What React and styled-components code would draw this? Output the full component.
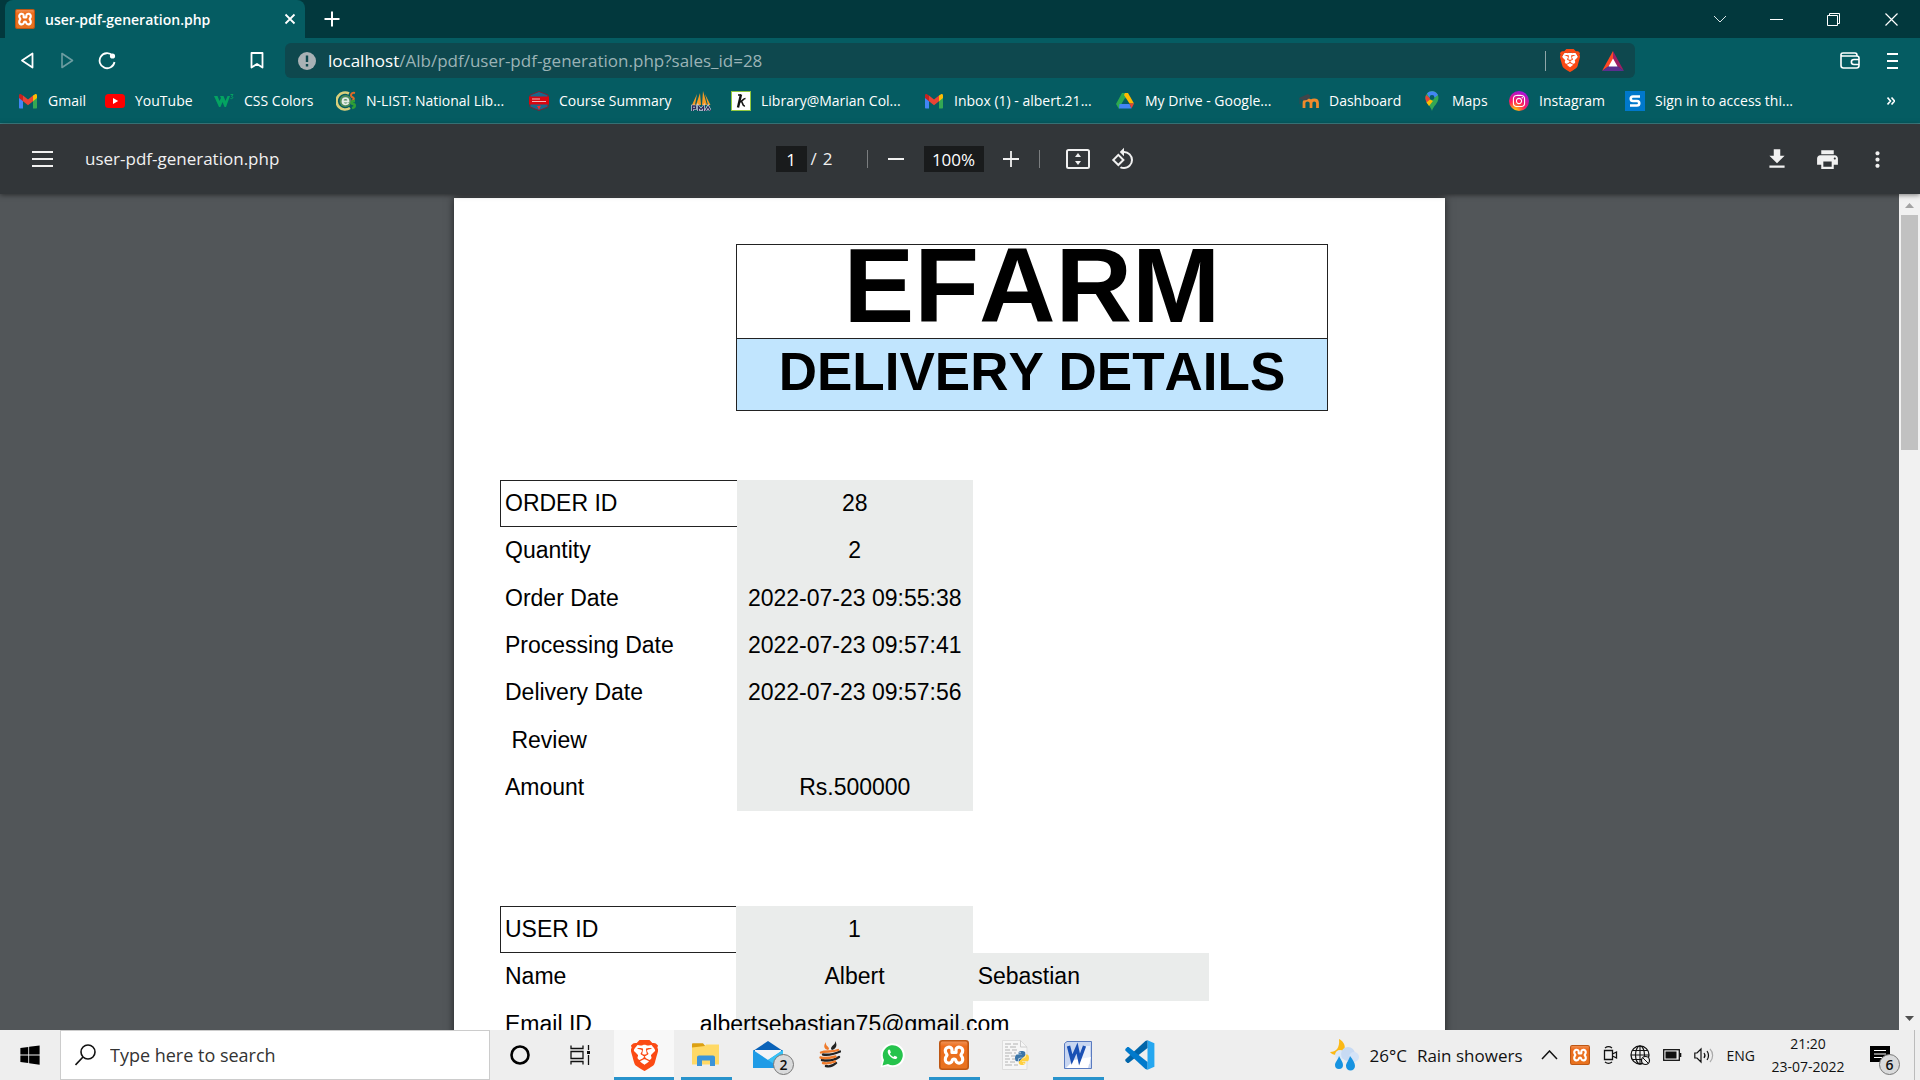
import React from "react";
import styled, { createGlobalStyle, css } from "styled-components";
import { SiBrave } from "react-icons/si";
import { FaWindows, FaInstagram, FaPython } from "react-icons/fa";
import {
  MdPrint,
  MdFileDownload,
  MdMoreVert,
  MdRotate90DegreesCcw,
} from "react-icons/md";

const ui = `"Open Sans", "Noto Sans", sans-serif`;
const doc = `"Liberation Sans", Arial, sans-serif`;

const GlobalStyle = createGlobalStyle`
  * { box-sizing: border-box; }
  body { margin: 0; font-family: ${ui}; overflow: hidden; }
  button, input { font: inherit; color: inherit; border: 0; padding: 0; margin: 0; background: none; }
  a { color: inherit; text-decoration: none; }
  svg { display: block; flex: none; }
`;

const Screen = styled.div`
  display: flex;
  flex-direction: column;
  height: 100vh;
`;

const IconButton = styled.button`
  display: flex;
  align-items: center;
  justify-content: center;
  flex: none;
  width: ${(p) => p.$w || 40}px;
  height: ${(p) => p.$h || 38}px;
`;

const Spacer = styled.div`
  flex: 1;
`;

/* ---------- browser chrome ---------- */

const TabStrip = styled.header`
  display: flex;
  flex: none;
  height: 38px;
  padding-left: 5px;
  background: #02383d;
  color: #fff;
`;

const Tab = styled.div`
  display: flex;
  align-items: center;
  width: 300px;
  padding: 0 6px 0 10px;
  border-radius: 8px 8px 0 0;
  background: #055c62;
  font-size: 14px;
  font-weight: 600;
`;

const TabTitle = styled.span`
  flex: 1;
  padding-left: 10px;
  white-space: nowrap;
`;

const AddressRow = styled.nav`
  display: flex;
  align-items: center;
  flex: none;
  height: 45px;
  padding: 0 8px 0 7px;
  background: #055c62;
  color: #fff;
`;

const NavButtons = styled.div`
  display: flex;
  width: 230px;
`;

const AddressBar = styled.div`
  display: flex;
  align-items: center;
  flex: 0 1 1350px;
  height: 35px;
  margin-left: 8px;
  padding: 0 3px 0 13px;
  border-radius: 6px;
  background: #0e484e;
`;

const Url = styled.a`
  flex: 1;
  padding-left: 12px;
  font-size: 17px;
  color: #9bb3b6;
  white-space: nowrap;
  b {
    font-weight: 400;
    color: #fff;
  }
`;

const BarRule = styled.span`
  width: 1px;
  height: 20px;
  background: #8fa6a8;
`;

const Bookmarks = styled.nav`
  display: flex;
  align-items: center;
  gap: 20px;
  flex: none;
  height: 41px;
  padding: 0 25px 5px 18px;
  border-bottom: 1px solid #3f8388;
  background: #055c62;
  color: #fff;
  font-size: 14px;
`;

const Bookmark = styled.a`
  display: flex;
  align-items: center;
  gap: 10px;
`;

const BookmarkLabel = styled.span`
  width: ${(p) => p.$w}px;
  white-space: nowrap;
`;

/* ---------- pdf viewer ---------- */

const PdfToolbar = styled.div`
  display: grid;
  grid-template-columns: 1fr auto 1fr;
  align-items: center;
  flex: none;
  position: relative;
  z-index: 1;
  height: 70px;
  padding: 0 23px 0 22px;
  background: #323639;
  color: #f1f1f1;
  box-shadow: 0 1px 5px rgba(0, 0, 0, 0.5);
`;

const ToolGroup = styled.div`
  display: flex;
  align-items: center;
  justify-content: ${(p) => (p.$end ? "flex-end" : "flex-start")};
  gap: ${(p) => p.$gap || 0}px;
`;

const FileName = styled.h1`
  margin: 0;
  font-size: 17px;
  font-weight: 500;
  line-height: 20px;
`;

const ToolField = styled.input`
  && {
    width: ${(p) => p.$w}px;
    height: 26px;
    background: #191b1c;
    color: #fff;
    font-size: 17px;
    text-align: center;
  }
`;

const PageCount = styled.span`
  display: flex;
  gap: 6px;
  width: 60px;
  padding-left: 4px;
  font-size: 17px;
  line-height: 20px;
`;

const ToolRule = styled.span`
  width: 1px;
  height: 18px;
  margin-right: ${(p) => p.$after || 0}px;
  background: #7b7e80;
`;

const Viewer = styled.main`
  display: flex;
  flex: 1;
  min-height: 0;
  overflow: hidden;
  background: #525659;
`;

const PageArea = styled.div`
  display: flex;
  justify-content: center;
  align-items: flex-start;
  flex: 1;
  padding-top: 4px;
  overflow: hidden;
`;

const Page = styled.article`
  flex: none;
  width: 991px;
  min-height: 1400px;
  padding: 46px;
  background: #fff;
  color: #000;
  font-family: ${doc};
  font-size: 23px;
  box-shadow: 0 0 8px rgba(0, 0, 0, 0.6);
`;

const TitleBlock = styled.div`
  width: 592px;
  margin-left: 236px;
  border: 1px solid #222;
  text-align: center;
  font-weight: 700;
  font-kerning: none;
  white-space: nowrap;
`;

const Title = styled.h2`
  margin: 0;
  height: 93px;
  font-size: 106px;
  line-height: 80px;
`;

const Subtitle = styled.h3`
  margin: 0;
  height: 72px;
  border-top: 1px solid #222;
  background: #c1e5fe;
  font-size: 53px;
  line-height: 65px;
`;

const Details = styled.table`
  table-layout: fixed;
  width: ${(p) => p.$cols * 236 + 1}px;
  height: ${(p) => p.$height}px;
  margin-top: ${(p) => p.$top}px;
  border-collapse: separate;
  border-spacing: 0;
`;

const Label = styled.th`
  padding: 0 5px;
  font-weight: 400;
  text-align: left;
  white-space: pre;
  ${(p) =>
    p.$boxed &&
    css`
      box-shadow: inset 1px 1px #222, inset 0 -1px #222;
    `}
`;

const Value = styled.td`
  padding: 0;
  background: #eaeceb;
`;

const ValueText = styled.div`
  display: flex;
  justify-content: ${(p) => (p.$left ? "flex-start" : "center")};
  padding-left: ${(p) => (p.$left ? 5 : 0)}px;
  white-space: nowrap;
`;

const Scrollbar = styled.div`
  display: flex;
  flex-direction: column;
  align-items: center;
  width: 21px;
  padding: 9px 2px;
  background: #f1f1f1;
`;

const Thumb = styled.div`
  width: 17px;
  height: 235px;
  margin: 7px 0 auto;
  background: #c1c1c1;
`;

/* ---------- taskbar ---------- */

const Taskbar = styled.footer`
  display: flex;
  flex: none;
  height: 50px;
  background: #eee;
  color: #111;
`;

const SearchBox = styled.label`
  display: flex;
  align-items: center;
  gap: 14px;
  width: 430px;
  padding-left: 14px;
  border: 1px solid #ccc;
  background: #fff;
`;

const SearchInput = styled.input`
  && {
    flex: 1;
    min-width: 0;
    font-size: 18px;
    color: #333;
    outline: 0;
  }
  &::placeholder {
    color: #333;
    opacity: 1;
  }
`;

const Apps = styled.div`
  display: flex;
  gap: 2px;
  padding-left: 4px;
`;

const AppButton = styled.button`
  && {
    position: relative;
    display: flex;
    align-items: center;
    justify-content: center;
    width: 60px;
    background: ${(p) => (p.$active ? "#f8f8f8" : "none")};
  }
  &::after {
    content: "";
    position: absolute;
    bottom: 0;
    left: ${(p) => (p.$active ? 0 : 5)}px;
    right: ${(p) => (p.$active ? 0 : 4)}px;
    height: 3px;
    background: ${(p) => (p.$open || p.$active ? "#2893cc" : "none")};
  }
`;

const CountBadge = styled.span`
  position: absolute;
  left: ${(p) => p.$x}px;
  top: 24px;
  width: 21px;
  height: 21px;
  border: 1px solid #777;
  border-radius: 50%;
  background: #d9dadb;
  color: #111;
  font-size: 14px;
  font-weight: 600;
  line-height: 19px;
  text-align: center;
`;

const Weather = styled.button`
  display: flex;
  align-items: center;
  gap: 10px;
  margin-right: 18px;
  font-size: 17px;
  white-space: nowrap;
`;

const Tray = styled.div`
  display: flex;
  align-items: center;
  gap: 12px;
  padding-right: 6px;
  font-size: 14px;
`;

const Clock = styled.button`
  display: flex;
  flex-direction: column;
  justify-content: center;
  align-items: center;
  width: 94px;
  font-size: 14px;
  line-height: 23px;
`;

const Notifications = styled.button`
  && {
    position: relative;
    width: 60px;
    margin-right: 5px;
    padding-left: 15px;
    border-right: 1px solid #bbb;
  }
`;

/* ---------- drawings ---------- */

const Svg = ({ w = 20, h = w, box, children, ...rest }) => (
  <svg
    width={w}
    height={h}
    viewBox={box || `0 0 ${w} ${h}`}
    fill="none"
    aria-hidden="true"
    {...rest}
  >
    {children}
  </svg>
);

const XamppIcon = ({ size = 20 }) => (
  <Svg w={size} box="0 0 30 30">
    <defs>
      <linearGradient id="xamppFill" x1="0" y1="0" x2="0" y2="1">
        <stop offset="0" stopColor="#f0955a" />
        <stop offset=".2" stopColor="#ee6d1d" />
        <stop offset="1" stopColor="#e8731f" />
      </linearGradient>
    </defs>
    <rect x=".8" y=".8" width="28.4" height="28.4" rx="2.5" fill="url(#xamppFill)" stroke="#bd5714" strokeWidth="1.6" />
    <path
      d="M13 12.500V10c0-4.500-8-3.500-6.500 2 .4 1.400 1.500 2 1.500 3s-1.100 1.600-1.500 3c-1.500 6 6 6.500 6.700 2.500.4-2 3.200-2 3.600 0 .7 4 8.200 3.500 6.700-2.500-.4-1.400-1.500-2-1.500-3s1.100-1.600 1.500-3c1.500-5.500-6.500-6.500-6.500-2v2.500z"
      stroke="#fff"
      strokeWidth="3.200"
      strokeLinejoin="round"
    />
  </Svg>
);

const BraveIcon = ({ w = 20, h = 23 }) => (
  <Svg w={w} h={h} box="2 0 20 24" preserveAspectRatio="none">
    <path d="M6 4h12l2 4-3 10-5 4-5-4L4 8z" fill="#fff" />
    <SiBrave size={24} color="#fb4a14" />
  </Svg>
);

const GmailIcon = () => (
  <Svg w={20} box="0 0 20 20">
    <path d="M1 5v11.500c0 .6.400 1 1 1h3V8z" fill="#4285f4" />
    <path d="M19 5v11.500c0 .6-.4 1-1 1h-3V8z" fill="#34a853" />
    <path d="M15 4.500 17 3.300c1-.6 2 .1 2 1.200V7l-4 3.200z" fill="#fbbc04" />
    <path d="M5 4.500 3 3.300c-1-.6-2 .1-2 1.200V7l4 3.200z" fill="#c5221f" />
    <path d="M5 4.500 10 8.500l5-4v5.700l-5 4-5-4z" fill="#ea4335" />
  </Svg>
);

const YouTubeIcon = () => (
  <Svg>
    <rect x="0" y="3" width="20" height="14" rx="3.500" fill="#f00" />
    <path d="m8 7 5.200 3L8 13z" fill="#fff" />
  </Svg>
);

const W3Icon = () => (
  <Svg>
    <path d="M0 5h3.500l2 5 1.500-3-1-2h3.500l2 5 2-5h2.500l-4 11h-1.500L8.500 11 6.500 16H5z" fill="#04a361" />
    <path d="M16.500 3.500h2.500l-1.500 2c2 0 1.800 2.800-1 2" stroke="#04a361" strokeWidth="1" />
  </Svg>
);

const NListIcon = () => (
  <Svg>
    <path d="M14 17A8.500 8.500 0 1 1 13 2.500" stroke="#d9cf7b" strokeWidth="2.600" />
    <circle cx="9.500" cy="10" r="6" fill="#4d8b5a" />
    <path d="M6.500 10.500h6c0-4.500-6-4.500-6 0 0 3.500 4.500 3.500 6 1.500" stroke="#e6ece8" strokeWidth="1.800" />
    <path d="M19 2c-4-1-5 3-3 4s3 2 0 4" stroke="#dd6a28" strokeWidth="2" />
    <path d="M19 10c-4 0-4 3-2 3s3 3-1 4" stroke="#2e9e36" strokeWidth="2.500" />
  </Svg>
);

const AcademyIcon = () => (
  <Svg>
    <path d="M10 .500 19 4v12l-9 3.500L1 16V4z" fill="#17688b" stroke="#7b2231" />
    <path d="M0 5.500h20v8H0z" fill="#d8060f" />
    <path d="M3 8h8M3 10.500h14" stroke="#f1b9bb" strokeWidth="1.200" />
    <path d="m8 15 4-.2-2 4z" fill="#f0282c" />
  </Svg>
);

const PmaIcon = () => (
  <Svg>
    <path d="M6 3 1 14h3zM9 2 5 14h5zM12 0l-1 14h5zM14 3l3 11h2.500z" fill="#f59a23" />
    <path d="M1.500 20v-5h3v2.500h-3M7.500 20v-4.500l2.500 3 2.500-3V20M14.500 20l2.500-4.500 2.500 4.500" stroke="#d8d8e6" strokeWidth="2.600" />
    <path d="M1.500 20v-5h3v2.500h-3M7.500 20v-4.500l2.500 3 2.500-3V20M14.500 20l2.500-4.500 2.500 4.500" stroke="#2c2d5a" strokeWidth="1.300" />
  </Svg>
);

const KohaIcon = () => (
  <Svg>
    <rect x=".5" y=".5" width="19" height="19" fill="#fff" stroke="#92c83e" />
    <path d="M10 3.500 7 16.500" stroke="#111" strokeWidth="2.400" />
    <path d="M7 4h3M8.500 11c3-.5 3.500-3.500 6-3.500M10 10.500c2.200 0 .8 5 4 4.500" stroke="#111" strokeWidth="1.600" />
  </Svg>
);

const DriveIcon = () => (
  <Svg box="0 0 20 20">
    <path d="m1 13 6-11h3l2 3-6 9-2 4z" fill="#2da94f" />
    <path d="M10 2h3l6 10.500h-4.500L9 4z" fill="#ffba00" />
    <path d="M4.500 13h10l2 4.500H4z" fill="#4385f4" />
    <path d="M14.500 12.500H19L16.500 17.500z" fill="#ea4335" />
    <path d="m10 7-3.500 6h7z" fill="#055c62" />
  </Svg>
);

const MoodleIcon = () => (
  <Svg>
    <path d="M5 17v-5c0-4 7-4 7 0v5m0-5c0-4 6.500-4 6.500 0v5" stroke="#f08a2c" strokeWidth="2.800" />
    <path d="m0 7 9-4 3 2-4 4-4 .5z" fill="#40454a" />
    <path d="M1 7v6" stroke="#40454a" />
  </Svg>
);

const MapsIcon = () => (
  <Svg>
    <path d="M10 20C9 15 3.500 12.500 3.500 6.500a6.500 6.500 0 0 1 13 0C16.500 12.500 11 15 10 20z" fill="#34a853" />
    <path d="M4 4 8.500 7.500 5 12C3 8.500 3 6.500 4 4z" fill="#ea4335" />
    <path d="M8 8.500 11 10l-4 5-2.500-3.500z" fill="#fbbc04" />
    <path d="M5 2.500C8-1 14-.5 16 4l-4 3-2-2-2 2.500z" fill="#4285f4" />
    <circle cx="10" cy="6.500" r="2.400" fill="#055c62" />
  </Svg>
);

const InstagramIcon = () => (
  <Svg>
    <defs>
      <radialGradient id="insta" cx=".3" cy="1" r="1.100">
        <stop offset="0" stopColor="#fd0" />
        <stop offset=".45" stopColor="#ff1f5a" />
        <stop offset="1" stopColor="#9a0ff0" />
      </radialGradient>
    </defs>
    <circle cx="10" cy="10" r="10" fill="url(#insta)" />
    <FaInstagram x="3" y="3" size={14} color="#fff" />
  </Svg>
);

const SIcon = () => (
  <Svg>
    <rect width="20" height="20" fill="#0078cc" />
    <path d="M15 5.500H8c-3 0-3 4.500 0 4.500h4c3 0 3 4.500 0 4.500H5" stroke="#fff" strokeWidth="2.600" />
  </Svg>
);

const BatIcon = () => (
  <Svg w={22} h={20}>
    <path d="M11 0 0 20l11-8z" fill="#ff4724" />
    <path d="M11 0v12l11 8z" fill="#9e1f63" />
    <path d="m0 20 11-8 11 8z" fill="#5b2f8f" />
    <path d="m11 7.500 4.500 8h-9z" fill="#fff" />
  </Svg>
);

const FolderIcon = () => (
  <Svg w={28} h={24}>
    <path d="M0 1.500C0 .7.500.3 1 .3h10l2.500 3v3H0z" fill="#dca012" />
    <path d="M0 4.500 13 3l1-1.500h13v20H0z" fill="#ffd966" />
    <path d="M5 23V14.500c0-1.200.8-2 2-2h14c1.200 0 2 .8 2 2V23h-5v-5.500h-8V23z" fill="#3b94d9" />
  </Svg>
);

const MailIcon = () => (
  <Svg w={30} h={30}>
    <path d="M0 11 15 1l15 10v17H0z" fill="#0a62b8" />
    <path d="M2 10h26v8L15 23 2 16z" fill="#f4f3f6" />
    <path d="m0 10 15 10 15-10v18H0z" fill="#1f9be6" />
    <path d="m30 10-15 10 12 8h3z" fill="#38c1f5" />
  </Svg>
);

const BeeIcon = () => (
  <Svg w={22} h={28}>
    <path d="M9 9C5 8 4 5 7 1c-1 4 3 4 3 7z" fill="#ef7a2a" />
    <path d="M12 8c0-4 5-4 4-8 3 4 1 8-3 9z" fill="#222" />
    <path d="M4 13.500c6 1 10 0 17-3M3 19c5 1 11 1 17-3M7 25c4 1 7 0 10-3" stroke="#222" strokeWidth="2.400" strokeLinecap="round" />
    <path d="M2 11.500c5-2 11 0 17-2.500M1.500 16.500c6 1.500 11 0 15-1M4 22c4 1 8 0 12-1.500" stroke="#ef7a2a" strokeWidth="2.400" strokeLinecap="round" />
  </Svg>
);

const WhatsAppIcon = () => (
  <Svg w={27} h={28}>
    <path d="M1.500 26.500 3 19.500A12 12 0 1 1 8.500 25z" fill="#fff" />
    <path d="M3.500 24.500 5 19A10 10 0 1 1 9 23z" fill="#25c34c" />
    <path d="M10 8.500c-2 1-1.500 4 .8 6.500s5.200 4 6.900 2.500c1-1.200.5-1.500-.5-2l-1.500-.8-1.400 1.300c-1.700-.8-2.800-2-3.400-3.200l1-1.400-.9-2.500z" fill="#fff" />
  </Svg>
);

const PythonFileIcon = () => (
  <Svg w={28} h={30}>
    <defs>
      <linearGradient id="py" x1="0" y1="0" x2="1" y2="1">
        <stop offset=".5" stopColor="#3d76a8" />
        <stop offset=".5" stopColor="#ffd040" />
      </linearGradient>
    </defs>
    <path d="M.5.500h18L25 7v22.500H.5z" fill="#f6f6f6" stroke="#ddd" />
    <path d="M18.500.500V7H25" stroke="#ccc" />
    <path d="M3 4h6m2 0h5M3 7h3m2 0h6M3 10h5m2 0h5M3 13h7m2 0h2M3 16h4m2 0h4M3 19h5m2 0h3M3 22h3m2 0h5M3 25h7m2 0h4" stroke="#c9c9c9" strokeWidth="1.400" />
    <FaPython x="12" y="10" size={16} fill="url(#py)" />
  </Svg>
);

const WordIcon = () => (
  <Svg w={28} h={28}>
    <path d="M.5 2.500 3 .500h24.500v27H.5z" fill="#c8d6f1" stroke="#5a7bc0" />
    <path d="M18 5h8v18H14z" fill="#e9effa" />
    <path d="m10 19 17-3-3 11H2z" fill="#fff" />
    <path d="M4.500 5 8 18.500 13 7l2.500 11.500L20.500 5" stroke="#1a50b4" strokeWidth="3.400" />
  </Svg>
);

const VsCodeIcon = () => (
  <Svg w={30} h={30} box="0 0 100 100">
    <path d="M75 1 98 11v78L75 99z" fill="#25a7f0" />
    <path d="M75 1v26L12 77l-4 0-7-7v-5L68 3z" fill="#0065a9" />
    <path d="M75 99V73L12 23H8l-7 7v5l67 62z" fill="#007acc" />
  </Svg>
);

const WeatherIcon = () => (
  <Svg w={29} h={32}>
    <path d="M9 0c8 4 8 14-2 16-3 0-6-1-7-3 6 0 10-4 9-13z" fill="#fbb917" />
    <circle cx="10" cy="16" r="5" fill="#dbe8f8" />
    <circle cx="18" cy="15" r="7" fill="#c7daf3" />
    <circle cx="24" cy="18" r="5" fill="#d4e3f7" />
    <path d="M9 17c2 4 4 6 4 9a4 4 0 0 1-8 0c0-3 3-5 4-9zM20 17c3 4 5 7 5 10a4.500 4.500 0 0 1-9 0c0-3 3-6 4-10z" fill="#1793e0" />
  </Svg>
);

const BOOKMARKS = [
  { label: "Gmail", w: 37, icon: <GmailIcon /> },
  { label: "YouTube", w: 59, icon: <YouTubeIcon /> },
  { label: "CSS Colors", w: 72, icon: <W3Icon /> },
  { label: "N-LIST: National Lib...", w: 143, icon: <NListIcon /> },
  { label: "Course Summary", w: 112, icon: <AcademyIcon /> },
  { label: "", icon: <PmaIcon /> },
  { label: "Library@Marian Col...", w: 143, icon: <KohaIcon /> },
  { label: "Inbox (1) - albert.21...", w: 141, icon: <GmailIcon /> },
  { label: "My Drive - Google...", w: 134, icon: <DriveIcon /> },
  { label: "Dashboard", w: 73, icon: <MoodleIcon /> },
  { label: "Maps", w: 37, icon: <MapsIcon /> },
  { label: "Instagram", w: 66, icon: <InstagramIcon /> },
  { label: "Sign in to access thi...", w: 143, icon: <SIcon /> },
];

const ORDER = [
  ["ORDER ID", "28"],
  ["Quantity", "2"],
  ["Order Date", "2022-07-23 09:55:38"],
  ["Processing Date", "2022-07-23 09:57:41"],
  ["Delivery Date", "2022-07-23 09:57:56"],
  [" Review", ""],
  ["Amount", "Rs.500000"],
];

const USER = [
  ["USER ID", "1"],
  ["Name", "Albert", "Sebastian"],
  ["Email ID", "albertsebastian75@gmail.com"],
];

const DetailTable = ({ rows, cols, top, height }) => (
  <Details $cols={cols} $top={top} $height={height}>
    <tbody>
      {rows.map(([label, value, extra], i) => (
        <tr key={label}>
          <Label scope="row" $boxed={i === 0}>{label}</Label>
          <Value><ValueText>{value}</ValueText></Value>
          {extra && <Value><ValueText $left>{extra}</ValueText></Value>}
        </tr>
      ))}
    </tbody>
  </Details>
);

export default function App() {
  return (
    <Screen>
      <GlobalStyle />
      <TabStrip>
        <Tab>
          <XamppIcon />
          <TabTitle>user-pdf-generation.php</TabTitle>
          <IconButton aria-label="Close tab" $w={18}>
            <Svg w={12}><path d="m1.500 1.500 9 9m0-9-9 9" stroke="#fff" strokeWidth="1.800" /></Svg>
          </IconButton>
        </Tab>
        <IconButton aria-label="New tab" $w={54}>
          <Svg w={16}><path d="M8 .500v15M.500 8h15" stroke="#fff" strokeWidth="2" /></Svg>
        </IconButton>
        <Spacer />
        <IconButton aria-label="Search tabs" $w={57}>
          <Svg w={14} h={8}><path d="m1 1 6 6 6-6" stroke="#dbe6e7" /></Svg>
        </IconButton>
        <IconButton aria-label="Minimize" $w={57}>
          <Svg w={13} h={1}><path d="M0 .500h13" stroke="#fff" /></Svg>
        </IconButton>
        <IconButton aria-label="Restore" $w={57}>
          <Svg w={13}><path d="M.5 2.500h10v10h-10zM2.500 2.500v-2h10v10h-2" stroke="#fff" /></Svg>
        </IconButton>
        <IconButton aria-label="Close window" $w={58}>
          <Svg w={13}><path d="m.5.500 12 12m0-12-12 12" stroke="#fff" strokeWidth="1.200" /></Svg>
        </IconButton>
      </TabStrip>

      <AddressRow>
        <NavButtons>
          <IconButton aria-label="Back">
            <Svg w={14} h={17} box="-1 0 14 17"><path d="M11.500 1.500v14L1 8.500z" stroke="#fff" strokeWidth="1.800" strokeLinejoin="round" /></Svg>
          </IconButton>
          <IconButton aria-label="Forward">
            <Svg w={14} h={17}><path d="M2 1.500v14l10.500-7z" stroke="#6d9da1" strokeWidth="1.600" strokeLinejoin="round" /></Svg>
          </IconButton>
          <IconButton aria-label="Reload">
            <Svg w={18}><path d="M14.500 3.500a7.500 7.500 0 1 0 2 6.500" stroke="#fff" strokeWidth="1.800" /><circle cx="14.500" cy="4" r="2.600" fill="#fff" /></Svg>
          </IconButton>
        </NavButtons>
        <IconButton aria-label="Bookmark this page">
          <Svg w={14} h={17}><path d="M1.500 1h11v14.500L7 12l-5.500 3.500z" stroke="#fff" strokeWidth="1.800" strokeLinejoin="round" /></Svg>
        </IconButton>
        <AddressBar>
          <Svg w={18}>
            <circle cx="9" cy="9" r="9" fill="#a9b1b5" />
            <path d="M9 3.500v6.500M9 12v2.500" stroke="#0e484e" strokeWidth="2.400" />
          </Svg>
          <Url href="#">
            <b>localhost</b>/Alb/pdf/user-pdf-generation.php?sales_id=28
          </Url>
          <BarRule />
          <IconButton aria-label="Brave Shields" $w={48} $h={35}><BraveIcon /></IconButton>
          <IconButton aria-label="Brave Rewards" $w={38} $h={35}><BatIcon /></IconButton>
        </AddressBar>
        <Spacer />
        <IconButton aria-label="Wallet" $w={44}>
          <Svg w={20} h={17}>
            <path d="M1 3v10.500C1 15 2 16 3.500 16h13c1.500 0 2.500-1 2.500-2.500V6C19 4.500 18 4 16.500 4H3C0 4 .500 1 3 1h12c1.500 0 2 1 2 2.500M19 7.500h-5c-3.500 0-3.500 5 0 5h5" stroke="#fff" strokeWidth="1.600" />
          </Svg>
        </IconButton>
        <IconButton aria-label="Menu">
          <Svg w={11} h={16} box="0 0 11 16"><path d="M0 1h11M0 8h11M0 15h11" stroke="#fff" strokeWidth="1.800" /></Svg>
        </IconButton>
      </AddressRow>

      <Bookmarks aria-label="Bookmarks">
        {BOOKMARKS.map((b, i) => (
          <Bookmark href="#" key={i} aria-label={b.label || "phpMyAdmin"}>
            {b.icon}
            {b.label && <BookmarkLabel $w={b.w}>{b.label}</BookmarkLabel>}
          </Bookmark>
        ))}
        <Spacer />
        <IconButton aria-label="More bookmarks" $w={8} $h={20}>
          <Svg w={8} h={8}><path d="m.5.500 3 3.500-3 3.500m4-7 3 3.500-3 3.500" stroke="#fff" strokeWidth="1.600" /></Svg>
        </IconButton>
      </Bookmarks>

      <PdfToolbar>
        <ToolGroup $gap={23}>
          <IconButton aria-label="Toggle sidebar">
            <Svg w={21} h={16}><path d="M0 1h21M0 8h21M0 15h21" stroke="#f1f1f1" strokeWidth="2" /></Svg>
          </IconButton>
          <FileName>user-pdf-generation.php</FileName>
        </ToolGroup>
        <ToolGroup>
          <ToolField $w={31} aria-label="Page number" defaultValue="1" />
          <PageCount><span>/</span><span>2</span></PageCount>
          <ToolRule />
          <IconButton aria-label="Zoom out" $w={56}>
            <Svg w={16} h={2}><path d="M0 1h16" stroke="#f1f1f1" strokeWidth="2" /></Svg>
          </IconButton>
          <ToolField $w={60} aria-label="Zoom level" defaultValue="100%" />
          <IconButton aria-label="Zoom in" $w={55}>
            <Svg w={16}><path d="M8 0v16M0 8h16" stroke="#f1f1f1" strokeWidth="1.800" /></Svg>
          </IconButton>
          <ToolRule $after={14} />
          <IconButton aria-label="Fit to page" $w={48}>
            <Svg w={24} h={20}>
              <rect x="1" y="1" width="22" height="18" rx="1.500" stroke="#f1f1f1" strokeWidth="2" />
              <path d="m9 8 3-4 3 4zM9 12l3 4 3-4z" fill="#f1f1f1" />
            </Svg>
          </IconButton>
          <IconButton aria-label="Rotate" $w={42}>
            <MdRotate90DegreesCcw size={24} color="#f1f1f1" />
          </IconButton>
        </ToolGroup>
        <ToolGroup $end $gap={10}>
          <IconButton aria-label="Download"><MdFileDownload size={26} /></IconButton>
          <IconButton aria-label="Print"><MdPrint size={25} /></IconButton>
          <IconButton aria-label="More actions"><MdMoreVert size={25} /></IconButton>
        </ToolGroup>
      </PdfToolbar>

      <Viewer>
        <PageArea>
          <Page>
            <TitleBlock>
              <Title>EFARM</Title>
              <Subtitle>DELIVERY DETAILS</Subtitle>
            </TitleBlock>
            <DetailTable rows={ORDER} cols={2} top={69} height={331} />
            <DetailTable rows={USER} cols={3} top={95} height={142} />
          </Page>
        </PageArea>
        <Scrollbar>
          <Svg w={9} h={5}><path d="M0 5 4.500 0 9 5z" fill="#a3a3a3" /></Svg>
          <Thumb />
          <Svg w={9} h={5}><path d="m0 0 4.500 5L9 0z" fill="#505050" /></Svg>
        </Scrollbar>
      </Viewer>

      <Taskbar>
        <IconButton aria-label="Start" $w={60} $h={50}><FaWindows size={22} color="#000" /></IconButton>
        <SearchBox>
          <Svg w={21} h={22}><circle cx="13" cy="8" r="7" stroke="#111" strokeWidth="1.600" /><path d="m8 13-7.500 8" stroke="#111" strokeWidth="1.600" /></Svg>
          <SearchInput type="search" aria-label="Search" placeholder="Type here to search" />
        </SearchBox>
        <IconButton aria-label="Cortana" $w={60} $h={50}>
          <Svg w={20}><circle cx="10" cy="10" r="8.500" stroke="#000" strokeWidth="2.600" /></Svg>
        </IconButton>
        <IconButton aria-label="Task view" $w={60} $h={50}>
          <Svg w={21}><path d="M1 .500v3h12v-3M1 19.500v-3h12v3M1 6.500h12v7H1zM18.500 0v5M18.500 10v10" stroke="#111" strokeWidth="1.300" /><path d="M17 6h3v3h-3z" fill="#111" /></Svg>
        </IconButton>
        <Apps>
          <AppButton $active aria-label="Brave"><BraveIcon w={27} h={31} /></AppButton>
          <AppButton $open aria-label="File Explorer"><FolderIcon /></AppButton>
          <AppButton aria-label="Mail"><MailIcon /><CountBadge $x={35}>2</CountBadge></AppButton>
          <AppButton aria-label="Bee"><BeeIcon /></AppButton>
          <AppButton aria-label="WhatsApp"><WhatsAppIcon /></AppButton>
          <AppButton $open aria-label="XAMPP"><XamppIcon size={30} /></AppButton>
          <AppButton aria-label="Python"><PythonFileIcon /></AppButton>
          <AppButton $open aria-label="Word"><WordIcon /></AppButton>
          <AppButton aria-label="Visual Studio Code"><VsCodeIcon /></AppButton>
        </Apps>
        <Spacer />
        <Weather><WeatherIcon /><span>26°C</span><span>Rain showers</span></Weather>
        <Tray>
          <Svg w={17} h={10}><path d="m1 9 7.500-8L16 9" stroke="#111" strokeWidth="1.500" /></Svg>
          <XamppIcon />
          <Svg w={16} h={18}><path d="M2.500 4.500h8v9h-8zM10.500 8l4-2v6l-4-2M3 2c2-1.500 5-1.500 7 0M3 16c2 1.500 5 1.500 7 0" stroke="#111" strokeWidth="1.300" /></Svg>
          <Svg w={21}><circle cx="10" cy="10" r="9" stroke="#111" strokeWidth="1.300" /><ellipse cx="10" cy="10" rx="4.500" ry="9" stroke="#111" strokeWidth="1.200" /><path d="M10 1v18M1 10h18M2.500 5.500h15M2.500 14.500h10" stroke="#111" strokeWidth="1.100" /><circle cx="15.500" cy="15.500" r="4" fill="#eee" stroke="#111" strokeWidth="1.200" /><path d="m13 13 5 5" stroke="#111" /></Svg>
          <Svg w={19} h={12}><rect x=".7" y=".7" width="15.600" height="10.600" stroke="#111" strokeWidth="1.300" /><path d="M2.500 2.500h11v7h-11z" fill="#111" /><path d="M17.500 4v4" stroke="#111" strokeWidth="1.600" /></Svg>
          <Svg w={21} h={17}><path d="M.8 6v5H3l4 4V2L3 6zM10 6c1.200 1.500 1.200 3.500 0 5M13 4c2 2.500 2 6.500 0 9" stroke="#111" strokeWidth="1.200" /><path d="M16 2c3.500 3.500 3.500 9.500 0 13" stroke="#aaa" strokeWidth="1.200" /></Svg>
          <span>ENG</span>
        </Tray>
        <Clock><span>21:20</span><span>23-07-2022</span></Clock>
        <Notifications aria-label="Notifications">
          <Svg w={20} h={19}><path d="M0 0h20v16h-6l-4 3v-3H0z" fill="#000" /><path d="M4 4.500h12M4 8h12M4 11.500h8" stroke="#fff" strokeWidth="1.200" /></Svg>
          <CountBadge $x={24}>6</CountBadge>
        </Notifications>
      </Taskbar>
    </Screen>
  );
}
